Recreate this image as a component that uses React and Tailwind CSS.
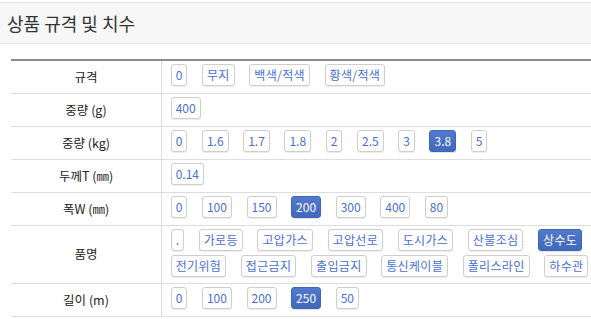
import React from 'react';

const rows = [
  { label: '규격', items: ['0', '무지', '백색/적색', '황색/적색'] },
  { label: '중량 (g)', items: ['400'] },
  { label: '중량 (kg)', items: ['0', '1.6', '1.7', '1.8', '2', '2.5', '3', '3.8', '5'], active: '3.8' },
  { label: '두께T (㎜)', items: ['0.14'] },
  { label: '폭W (㎜)', items: ['0', '100', '150', '200', '300', '400', '80'], active: '200' },
  {
    label: '품명',
    items: ['.', '가로등', '고압가스', '고압선로', '도시가스', '산불조심', '상수도', '전기위험', '접근금지', '출입금지', '통신케이블', '폴리스라인', '하수관'],
    active: '상수도',
    tall: true,
  },
  { label: '길이 (m)', items: ['0', '100', '200', '250', '50'], active: '250' },
];

const hasHangul = (s) => /[가-힣]/.test(s);

const Option = ({ text, active }) => {
  const base = 'h-[22px] px-[4px] rounded-[3px] border text-[12px] leading-none';
  const tone = active
    ? 'border-[#3f65b5] bg-gradient-to-b from-[#5279cb] to-[#4268bc] text-white shadow-[0_1px_1px_rgba(0,0,0,0.12)]'
    : 'border-[#cfcfcf] bg-white text-[#4a6fd0] shadow-[0_1px_1px_rgba(0,0,0,0.08)]';
  const spacing = hasHangul(text) ? 'tracking-[0.35px]' : '';
  return <button className={`${base} ${tone} ${spacing}`}>{text}</button>;
};

const App = () => {
  return (
    <div className="w-[591px] h-[319px] overflow-hidden bg-white font-['Noto_Sans_CJK_KR',sans-serif]">
      <div className="mt-[2px] h-[42px] border-y border-[#e6e6e6] bg-[#f7f7f7] flex items-center pl-[7px]">
        <h2 className="text-[18px] text-[#333] leading-none">상품 규격 및 치수</h2>
      </div>

      <div className="mt-[15px] ml-[11px] w-[620px] border-t-2 border-[#8c8c8c]">
        {rows.map((row) => (
          <div
            key={row.label}
            className={`flex border-b border-[#dddddd] ${row.tall ? 'h-[58px]' : 'h-[33px]'}`}
          >
            <div className="w-[151px] shrink-0 border-r border-[#dddddd] flex items-center justify-center text-[12.5px] text-[#222]">
              {row.label}
            </div>
            <div className="flex-1 pl-[8.7px] pr-[6px] pt-[3px] flex flex-wrap content-start gap-x-[14.6px] gap-y-[4px]">
              {row.items.map((it) => (
                <Option key={it} text={it} active={row.active === it} />
              ))}
            </div>
          </div>
        ))}
      </div>
    </div>
  );
};

export default App;
